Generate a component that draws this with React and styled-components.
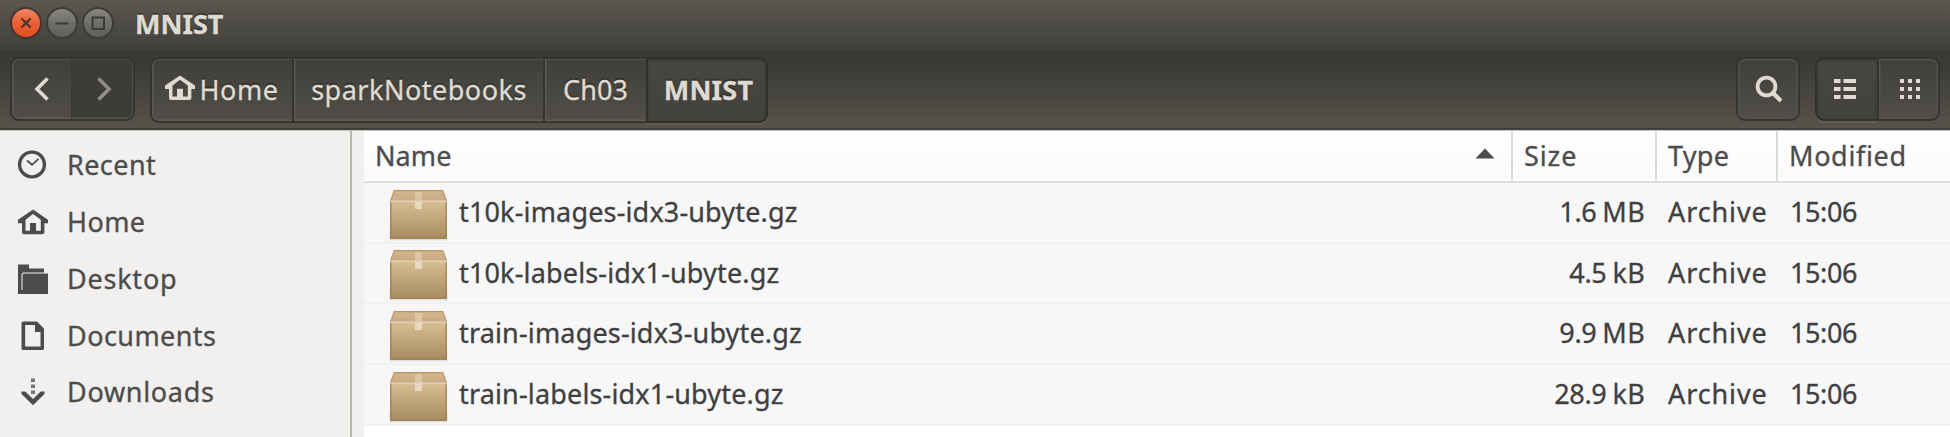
import React from "react";
import styled, { createGlobalStyle, css } from "styled-components";

const GlobalStyle = createGlobalStyle`
  * { box-sizing: border-box; }
  body { margin: 0; overflow: hidden; background: #fff; }
`;

const Window = styled.div`
  width: 1950px;
  height: 437px;
  display: flex;
  flex-direction: column;
  background: #fff;
  color: #4c4c4c;
  font: 27px/38px "Noto Sans", "Open Sans", sans-serif;
  white-space: nowrap;
`;

const Label = styled.span`
  letter-spacing: ${(p) => p.$track || 0}px;
  -webkit-text-stroke: 0.3px currentColor;
`;

/* title bar */
const TitleBar = styled.header`
  flex: none;
  height: 51px;
  display: flex;
  align-items: flex-start;
  padding-left: 10px;
  background: linear-gradient(#5c5850 0, #504e47 20px, #403f3a 51px);
`;

const WindowButtons = styled.div`
  display: flex;
  gap: 4px;
  padding-top: 7px;
`;

const WindowButton = styled.button`
  width: 32px;
  height: 32px;
  padding: 0;
  display: block;
  border: 2px solid ${(p) => (p.$close ? "#45332c" : "#3c3b37")};
  border-radius: 50%;
  background: ${(p) =>
    p.$close ? "linear-gradient(#f08763, #ea5f35 50%, #df4f20)" : "linear-gradient(#88867f, #706e69 50%, #62605b)"};

  svg { display: block; width: 28px; height: 28px; }
`;

const WindowTitle = styled.h1`
  margin: 0 0 0 21px;
  padding-top: 5px;
  font-size: 27px;
  line-height: 38px;
  font-weight: 700;
  color: #dfdbd2;
  text-shadow: 0 -2px 1px rgba(30, 29, 26, 0.55);
`;

/* toolbar */
const Toolbar = styled.div`
  flex: none;
  height: 79px;
  display: flex;
  align-items: flex-start;
  padding: 5px 10px 0;
  background: linear-gradient(#3a3935, #3c3b37 15px, #4b4942 50px, #56534b 76px);
  border-top: 1px solid #373632;
  border-bottom: 2px solid #3e3d38;
  color: #dfdbd2;
`;

const ButtonGroup = styled.div`
  display: flex;
  height: ${(p) => p.$height || 64}px;
  margin-left: ${(p) => p.$offset || 0}px;
`;

const Spacer = styled.div`
  flex: 1;
`;

const ToolButton = styled.button`
  width: ${(p) => p.$width}px;
  padding: 0 0 0 ${(p) => p.$nudge || 0}px;
  display: flex;
  align-items: center;
  justify-content: center;
  font: inherit;
  color: ${(p) => (p.$muted ? "#918e86" : "#dfdbd2")};
  background: linear-gradient(#403f3a, #504e47);
  border: 2px solid #35342f;
  border-right-width: 0;
  box-shadow: inset 2px 0 0 -0.5px #5b5952, inset 0 1px 0 #55534d, inset 0 -1.5px 0 #615f58;
  text-shadow: 0 -2px 1px rgba(30, 29, 26, 0.5);

  &:first-child { border-radius: 9px 0 0 9px; }
  &:last-child { border-radius: 0 9px 9px 0; border-right-width: 2px; box-shadow: inset 0 0 0 1.5px #55534d; }
  &:only-child { border-radius: 9px; }

  ${(p) =>
    p.$muted &&
    css`
      background: #3d3c38;
      border-left-color: #393834;
      border-left-width: 1px;
      &:last-child { box-shadow: inset -1px 0 0 #53514b, inset 0 1px 0 #4a4943, inset 0 -1.5px 0 #5b5952; }
    `}

  ${(p) =>
    p.$active &&
    css`
      font-weight: 700;
      background: linear-gradient(#484640, #43423c);
      border-color: #31302c;
      &, &:last-child { box-shadow: inset 0 1px 2px #35342f, 0 2px 0 #605d55; }
    `}
`;

const HomeIcon = styled.svg`
  flex: none;
  width: 30px;
  height: 26px;
  margin-right: 4px;
  margin-top: -4px;
`;

/* content */
const Content = styled.main`
  flex: 1;
  min-height: 0;
  display: flex;
  border-top: 1px solid #c6c4c1;
`;

const Sidebar = styled.nav`
  flex: none;
  width: 352px;
  padding-top: 6px;
  background: #f1f0ee;
  border-right: 2px solid #b9b6b2;
`;

const Place = styled.a`
  height: 56.75px;
  display: flex;
  align-items: center;

  svg { flex: none; width: 32px; height: 32px; margin: 0 18px 0 17px; }
`;

const Gutter = styled.div`
  flex: none;
  width: 12px;
  background: #f1f0ee;
`;

const FileList = styled.section`
  flex: 1;
  display: flex;
  flex-direction: column;
`;

const columns = css`
  display: grid;
  grid-template-columns: 1149px 144px 121px 1fr;
`;

const ListHeader = styled.div`
  ${columns}
  height: 52px;
  background: linear-gradient(#ffffff, #fafafa 47px, #ffffff 48px);
  border-bottom: 2px solid #e1dcd6;
`;

const HeaderCell = styled.div`
  display: flex;
  align-items: center;
  justify-content: space-between;
  padding: 0 16px 1px ${(p) => p.$inset || 12}px;
  border-right: 2px solid #dcdad8;

  &:last-child { border-right: 0; }
`;

const SortArrow = styled.svg`
  width: 20px;
  height: 12px;
  margin-top: -3px;
`;

const FileRow = styled.div`
  ${columns}
  height: ${(p) => p.$height}px;
  align-items: center;
  background: #f7f7f7;
  border-bottom: 2px solid #f1f1f1;
  color: #3f3f3f;
`;

const NameCell = styled.div`
  height: 57px;
  display: flex;
  align-items: center;
  padding-left: 24px;

  svg { flex: none; width: 61px; height: 54px; margin: 4px 10px 0 0; }
  span { margin-top: -1px; }
`;

const SizeCell = styled.div`
  display: flex;
  justify-content: flex-end;
  gap: 6px;
  padding: 0 12px 1px 0;
`;

const TextCell = styled.div`
  padding: 0 0 1px ${(p) => p.$inset || 11}px;
`;

const House = () => (
  <path
    d="M15 0.4 0 10.6V14h4v9.2Q4 25 6 25h18q2.4 0 2.4-2V14H30v-3.4ZM7.5 10.5 15 4.7l7.8 5.8V21.5H18v-7.8h-6v7.8H7.5Z"
    fill="currentColor"
    fillRule="evenodd"
  />
);

const placeIcons = {
  recent: (
    <svg viewBox="0 0 32 32" fill="none" stroke="#4c4c4c">
      <circle cx="15" cy="15.5" r="12.4" strokeWidth="3.4" />
      <path d="m10 11.5 5 4.3 6.5-6" strokeWidth="1.8" />
    </svg>
  ),
  home: (
    <svg viewBox="0 0 32 32">
      <g transform="translate(1 3.2)"><House /></g>
    </svg>
  ),
  desktop: (
    <svg viewBox="0 0 32 32">
      <path d="M1 2.5h11v4h15v4H6.5q-2 0-2 2V28h1V12.5q0-1 1.5-1h24V32H1Z" fill="#4c4c4c" transform="translate(0 -1)" />
    </svg>
  ),
  documents: (
    <svg viewBox="0 0 32 32">
      <path d="M6.5 1.5H20l7 7V28.5q0 1.5-1.5 1.5h-19Q4.5 30 4.5 28.5V3Q4.5 1.5 6.5 1.5ZM8.2 5v21.4h15.3V12H18V5Z" fill="#4c4c4c" fillRule="evenodd" />
    </svg>
  ),
  downloads: (
    <svg viewBox="0 0 32 32">
      <path d="M14 2.5h4v3.6h-4zM14 8.5h4v3.6h-4zM14 14.5h4v3.6h-4z" fill="#757575" />
      <path d="M4.5 15.5h3.8L16 23l7.7-7.5h3.8v2.6L16 29.2 4.5 18.1Z" fill="#4c4c4c" />
    </svg>
  ),
};

const ArchiveIcon = () => (
  <svg viewBox="0 0 61 54">
    <defs>
      <linearGradient id="box-front" x2="0" y2="1">
        <stop offset="0" stopColor="#d8bf94" />
        <stop offset="1" stopColor="#a68a60" />
      </linearGradient>
      <linearGradient id="box-lid" x2="0" y2="1">
        <stop offset="0" stopColor="#d2b88c" />
        <stop offset="1" stopColor="#c9a985" />
      </linearGradient>
    </defs>
    <path d="M1 42h59v9.5H1z" fill="#000" opacity="0.05" />
    <path d="M2 50h57v2.6H2z" fill="#000" opacity="0.08" />
    <path d="M6.5 2h48L59 13H2Z" fill="url(#box-lid)" />
    <path d="M6.5 2.6h48" stroke="#b89468" strokeWidth="1.2" />
    <path d="M6.5 2 2.6 13M54.5 2l4 11" stroke="#c09b75" strokeWidth="1.4" />
    <path d="M2 12.5h57V50q0 1-1 1H3q-1 0-1-1Z" fill="url(#box-front)" />
    <path d="M2.8 13v37h55.4V13" fill="none" stroke="#a37d4d" strokeWidth="1.5" opacity="0.8" />
    <path d="M2.5 13.4h56" stroke="#e0cdb4" strokeWidth="1.6" />
    <path d="M27 4h7v10h-7z" fill="#e3d2b4" opacity="0.65" />
    <path d="M27 14h7v7h-7z" fill="#eadcc4" opacity="0.9" />
  </svg>
);

const places = [
  { icon: "recent", name: "Recent", track: 0.42 },
  { icon: "home", name: "Home", track: 0.4 },
  { icon: "desktop", name: "Desktop", track: 0.77 },
  { icon: "documents", name: "Documents", track: 0.43 },
  { icon: "downloads", name: "Downloads", track: 0.69 },
];

const files = [
  { name: "t10k-images-idx3-ubyte.gz", amount: "1.6", unit: "MB", height: 61 },
  { name: "t10k-labels-idx1-ubyte.gz", amount: "4.5", unit: "kB", height: 60 },
  { name: "train-images-idx3-ubyte.gz", amount: "9.9", unit: "MB", height: 61 },
  { name: "train-labels-idx1-ubyte.gz", amount: "28.9", unit: "kB", height: 61 },
];

export default function App() {
  return (
    <Window>
      <GlobalStyle />
      <TitleBar>
        <WindowButtons>
          <WindowButton $close aria-label="Close">
            <svg viewBox="0 0 28 28"><path d="m9.5 9.5 9 9m0-9-9 9" stroke="#51352b" strokeWidth="2.3" /></svg>
          </WindowButton>
          <WindowButton aria-label="Minimize">
            <svg viewBox="0 0 28 28"><path d="M7.5 14.5h13" stroke="#3c3b37" strokeWidth="2" /></svg>
          </WindowButton>
          <WindowButton aria-label="Maximize">
            <svg viewBox="0 0 28 28"><path d="M8.5 8.5h11.5v11.5H8.5z" fill="none" stroke="#3c3b37" strokeWidth="2" /></svg>
          </WindowButton>
        </WindowButtons>
        <WindowTitle><Label>MNIST</Label></WindowTitle>
      </TitleBar>

      <Toolbar>
        <ButtonGroup>
          <ToolButton $width={61} aria-label="Back">
            <svg width="16" height="26" viewBox="0 0 16 26"><path d="M13.5 2.5 3 13l10.5 10.5" fill="none" stroke="currentColor" strokeWidth="3.6" /></svg>
          </ToolButton>
          <ToolButton $width={64} $muted $nudge={3} aria-label="Forward">
            <svg width="16" height="26" viewBox="0 0 16 26"><path d="M2.5 2.5 13 13 2.5 23.5" fill="none" stroke="currentColor" strokeWidth="3.6" /></svg>
          </ToolButton>
        </ButtonGroup>
        <ButtonGroup $offset={15} $height={66}>
          <ToolButton $width={142}>
            <HomeIcon viewBox="0 0 30 26"><House /></HomeIcon>
            <Label $track={0.6}>Home</Label>
          </ToolButton>
          <ToolButton $width={251} $nudge={1}><Label $track={0.5}>sparkNotebooks</Label></ToolButton>
          <ToolButton $width={103}><Label $track={0.1}>Ch03</Label></ToolButton>
          <ToolButton $width={122} $active $nudge={3}><Label $track={0.2}>MNIST</Label></ToolButton>
        </ButtonGroup>
        <Spacer />
        <ButtonGroup>
          <ToolButton $width={64} $nudge={1} aria-label="Search">
            <svg width="28" height="28" viewBox="0 0 28 28" fill="none" stroke="currentColor">
              <circle cx="11.5" cy="11.5" r="8.9" strokeWidth="3.8" />
              <path d="m17.5 17.5 8.5 8.5" strokeWidth="4.2" />
            </svg>
          </ToolButton>
        </ButtonGroup>
        <ButtonGroup $offset={15}>
          <ToolButton $width={62} $active aria-label="List view">
            <svg width="26" height="20" viewBox="0 0 26 20" fill="currentColor">
              <path d="M0 0h6.5v4H0zM9.5 0H22v4H9.5zM0 8h6.5v4H0zM9.5 8H22v4H9.5zM0 16h6.5v4H0zM9.5 16H22v4H9.5z" />
            </svg>
          </ToolButton>
          <ToolButton $width={63} $nudge={2} aria-label="Grid view">
            <svg width="20" height="20" viewBox="0 0 20 20" fill="currentColor">
              <path d="M0 0h4v4H0zM8 0h4v4H8zM16 0h4v4h-4zM0 8h4v4H0zM8 8h4v4H8zM16 8h4v4h-4zM0 16h4v4H0zM8 16h4v4H8zM16 16h4v4h-4z" />
            </svg>
          </ToolButton>
        </ButtonGroup>
      </Toolbar>

      <Content>
        <Sidebar>
          {places.map((place) => (
            <Place key={place.name}>
              {placeIcons[place.icon]}
              <Label $track={place.track}>{place.name}</Label>
            </Place>
          ))}
        </Sidebar>
        <Gutter />
        <FileList>
          <ListHeader>
            <HeaderCell $inset={11}>
              <Label $track={0.1}>Name</Label>
              <SortArrow viewBox="0 0 20 12"><path d="M10 0.5 19.5 10.5H0.5Z" fill="#4c4c4c" /></SortArrow>
            </HeaderCell>
            <HeaderCell $inset={11}><Label $track={0.9}>Size</Label></HeaderCell>
            <HeaderCell $inset={11}><Label $track={0.3}>Type</Label></HeaderCell>
            <HeaderCell $inset={11}><Label $track={0.65}>Modified</Label></HeaderCell>
          </ListHeader>
          {files.map((file) => (
            <FileRow key={file.name} $height={file.height}>
              <NameCell>
                <ArchiveIcon />
                <Label $track={0.16}>{file.name}</Label>
              </NameCell>
              <SizeCell>
                <Label $track={-0.35}>{file.amount}</Label>
                <Label $track={0.3}>{file.unit}</Label>
              </SizeCell>
              <TextCell><Label $track={0.9}>Archive</Label></TextCell>
              <TextCell $inset={12}><Label $track={-0.39}>15:06</Label></TextCell>
            </FileRow>
          ))}
        </FileList>
      </Content>
    </Window>
  );
}
